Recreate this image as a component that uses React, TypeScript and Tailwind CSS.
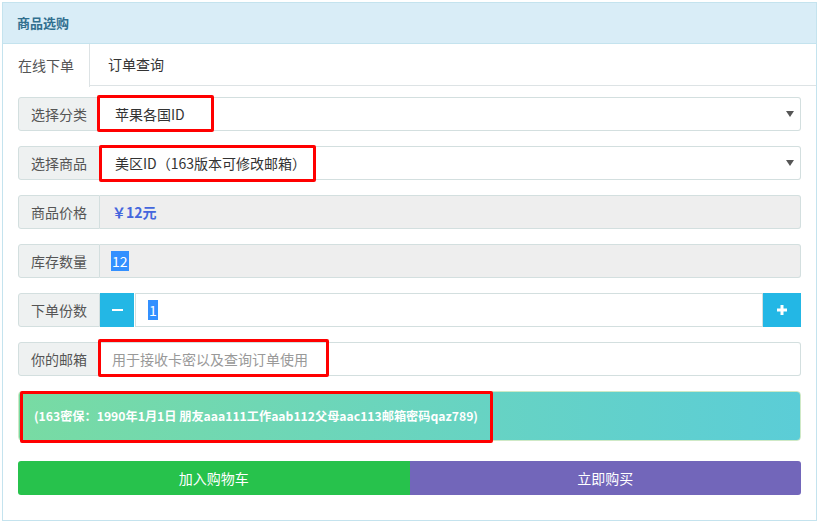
import React from 'react';

const font = { fontFamily: '"Noto Sans CJK SC", "Noto Sans", sans-serif' };

const Label: React.FC<{ text: string }> = ({ text }) => (
  <div className="w-[82px] shrink-0 h-full flex items-center justify-center bg-[#eef1f1] border border-[#d3dfdf] rounded-l-[3px] text-[14px] text-[#555]">
    {text}
  </div>
);

const RedBox: React.FC<{ className: string }> = ({ className }) => (
  <div className={`absolute border-[3px] border-[#ff0000] rounded-[2px] pointer-events-none ${className}`} />
);

const Arrow = () => (
  <svg width="8" height="6" viewBox="0 0 8 6" className="mr-[6px]">
    <path d="M0 0 H8 L4 6 Z" fill="#555" />
  </svg>
);

const App: React.FC = () => {
  return (
    <div className="w-[820px] h-[524px] bg-white p-[2px]" style={font}>
      <div className="relative w-[815px] h-[519px] border border-[#c4e3ee] flex flex-col">
        {/* panel header */}
        <div className="h-[41px] shrink-0 bg-[#d9edf7] border-b border-[#c4e3ee] flex items-center px-[14px]">
          <span className="text-[13px] font-bold text-[#31708f]">商品选购</span>
        </div>

        {/* tabs */}
        <div className="h-[42px] shrink-0 flex border-b border-[#dde3e5]">
          <div className="w-[87px] h-[43px] bg-white border-r border-[#dde3e5] flex items-center justify-center text-[14px] text-[#555]">
            在线下单
          </div>
          <div className="px-[18px] flex items-center text-[14px] text-[#333]">订单查询</div>
        </div>

        {/* form */}
        <div className="flex flex-col gap-[15px] pt-[11px] pl-[15px] pr-[15px]">
          <div className="h-[34px] flex">
            <Label text="选择分类" />
            <div className="flex-1 flex items-center justify-between border border-l-0 border-[#d3dfdf] rounded-r-[3px] bg-white pl-[15px] text-[14px] text-[#333]">
              <span>苹果各国ID</span>
              <Arrow />
            </div>
          </div>

          <div className="h-[34px] flex">
            <Label text="选择商品" />
            <div className="flex-1 flex items-center justify-between border border-l-0 border-[#d3dfdf] rounded-r-[3px] bg-white pl-[15px] text-[14px] text-[#333]">
              <span>美区ID（163版本可修改邮箱）</span>
              <Arrow />
            </div>
          </div>

          <div className="h-[34px] flex">
            <Label text="商品价格" />
            <div className="flex-1 flex items-center border border-l-0 border-[#d3dfdf] rounded-r-[3px] bg-[#eee] pl-[12px] text-[14px] font-bold text-[#4466dd]">
              ￥12元
            </div>
          </div>

          <div className="h-[34px] flex">
            <Label text="库存数量" />
            <div className="flex-1 flex items-center border border-l-0 border-[#d3dfdf] rounded-r-[3px] bg-[#eee] pl-[11px] text-[14px] text-white">
              <span className="bg-[#3390ff] px-[1px] leading-[20px]">12</span>
            </div>
          </div>

          <div className="h-[34px] flex">
            <Label text="下单份数" />
            <div className="w-[34px] shrink-0 bg-[#23b7e5] flex items-center justify-center">
              <div className="w-[11px] h-[2px] bg-white" />
            </div>
            <div className="flex-1 flex items-center border border-[#d3dfdf] ml-[1px] bg-white pl-[12px] text-[14px] text-white">
              <span className="bg-[#3390ff] px-[1px] leading-[20px]">1</span>
            </div>
            <div className="w-[38px] shrink-0 bg-[#23b7e5] flex items-center justify-center">
              <svg width="10" height="10" viewBox="0 0 10 10">
                <path d="M3.5 0 H6.5 V3.5 H10 V6.5 H6.5 V10 H3.5 V6.5 H0 V3.5 H3.5 Z" fill="#fff" />
              </svg>
            </div>
          </div>

          <div className="h-[34px] flex">
            <Label text="你的邮箱" />
            <div className="flex-1 flex items-center border border-l-0 border-[#d3dfdf] rounded-r-[3px] bg-white pl-[12px] text-[14px] text-[#999]">
              用于接收卡密以及查询订单使用
            </div>
          </div>

          <div className="h-[50px] flex items-center rounded-[4px] border border-[#cfe9c6] bg-gradient-to-r from-[#78dba3] to-[#5bcdd7] pl-[15px] text-[12.2px] font-bold text-white">
            (163密保：1990年1月1日 朋友aaa111工作aab112父母aac113邮箱密码qaz789)
          </div>

          <div className="h-[34px] flex mt-[5px] rounded-[3px] overflow-hidden text-[14px] text-white">
            <div className="flex-1 bg-[#27c24c] flex items-center justify-center">加入购物车</div>
            <div className="flex-1 bg-[#7266ba] flex items-center justify-center">立即购买</div>
          </div>
        </div>

        {/* annotation boxes */}
        <RedBox className="left-[94px] top-[92px] w-[117px] h-[37px]" />
        <RedBox className="left-[96px] top-[142px] w-[217px] h-[37px]" />
        <RedBox className="left-[95px] top-[336px] w-[231px] h-[38px]" />
        <RedBox className="left-[17px] top-[388px] w-[473px] h-[52px]" />
      </div>
    </div>
  );
};

export default App;
